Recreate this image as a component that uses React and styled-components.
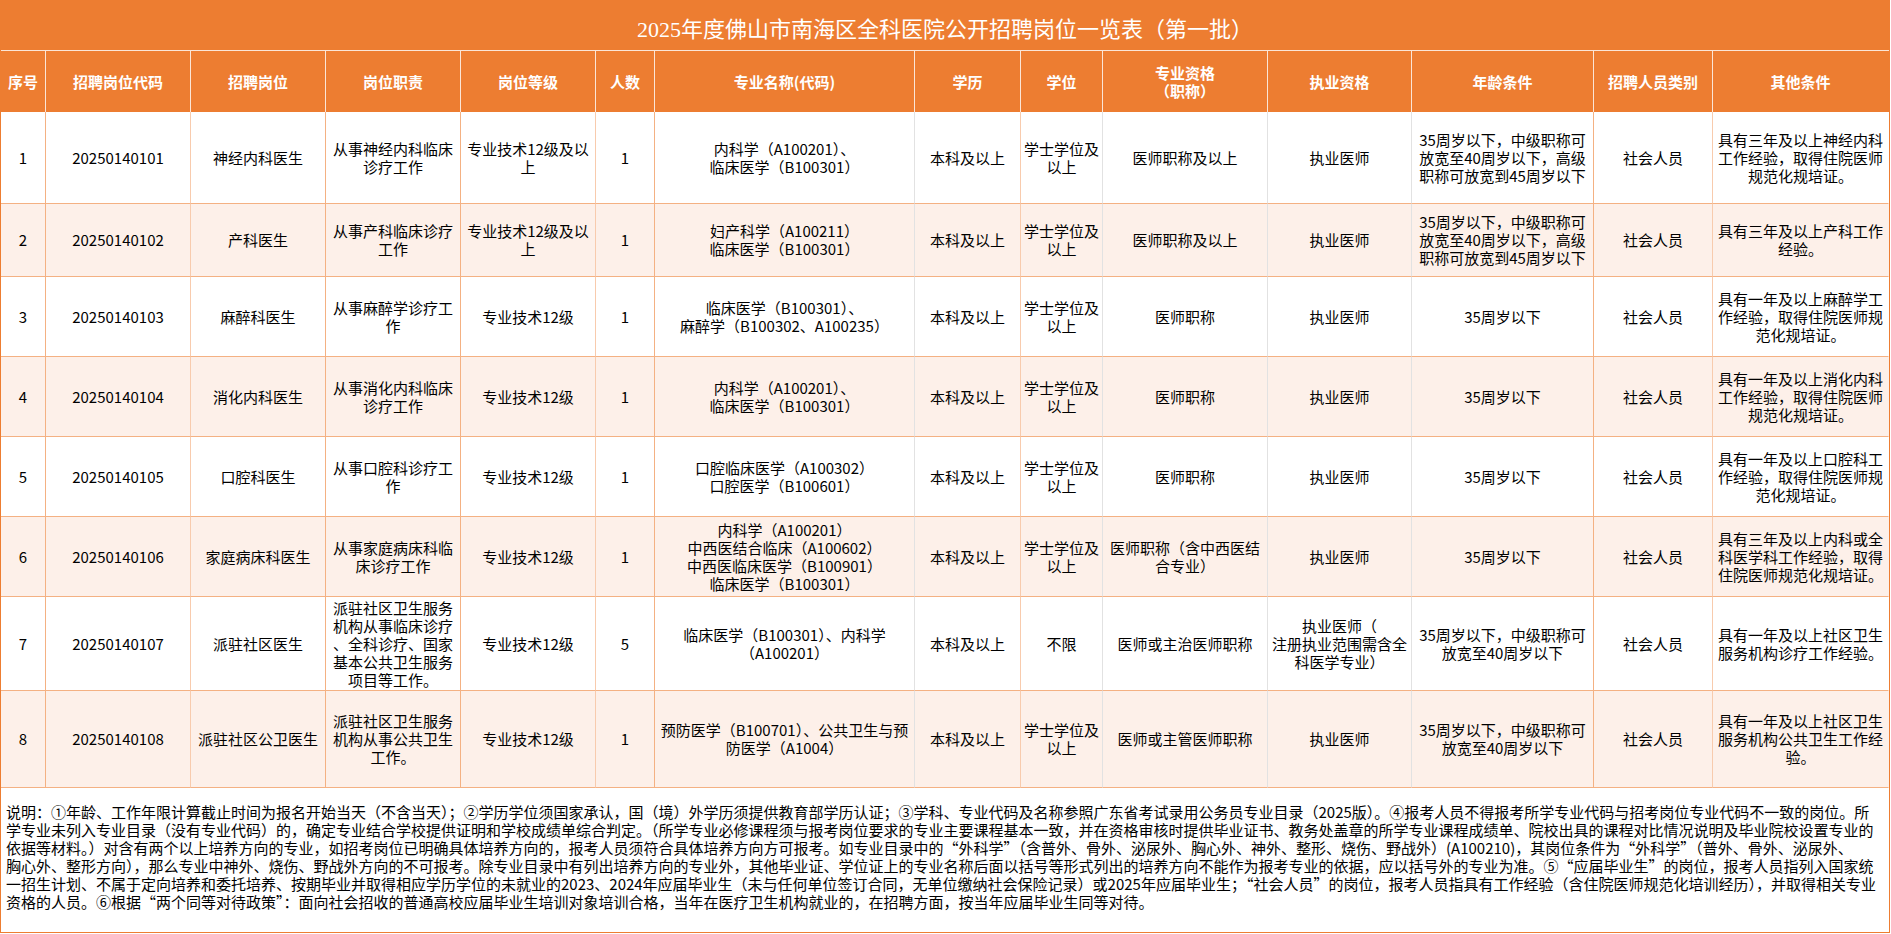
import React from 'react';
import styled, { createGlobalStyle } from 'styled-components';

const GlobalStyle = createGlobalStyle`
  html, body { margin: 0; padding: 0; background: #ffffff; }
  body {
    font-family: "Noto Sans CJK SC", "Noto Sans", sans-serif;
    color: #000000;
  }
  *, *::before, *::after { box-sizing: border-box; }
`;

const ORANGE = '#ED7D31';
const STRONG = '#F4B183';
const LIGHT = '#F8CBAD';
const GREY = '#E2E2E2';

const COLUMNS = [
  { w: 45, line: STRONG },
  { w: 145, line: LIGHT },
  { w: 135, line: STRONG },
  { w: 135, line: STRONG },
  { w: 135, line: LIGHT },
  { w: 59, line: STRONG },
  { w: 260, line: GREY },
  { w: 106, line: LIGHT },
  { w: 82, line: GREY },
  { w: 165, line: GREY },
  { w: 144, line: GREY },
  { w: 182, line: STRONG },
  { w: 119, line: LIGHT },
  { w: 176, line: 'transparent' },
];

const GRID = COLUMNS.map((c) => `${c.w}px`).join(' ');

const HEADERS = [
  '序号',
  '招聘岗位代码',
  '招聘岗位',
  '岗位职责',
  '岗位等级',
  '人数',
  '专业名称(代码)',
  '学历',
  '学位',
  '专业资格\n（职称）',
  '执业资格',
  '年龄条件',
  '招聘人员类别',
  '其他条件',
];

const AGE_LONG = '35周岁以下，中级职称可\n放宽至40周岁以下，高级\n职称可放宽到45周岁以下';
const AGE_MID = '35周岁以下，中级职称可\n放宽至40周岁以下';
const DEGREE = '学士学位及\n以上';

const ROWS = [
  {
    h: 92,
    cells: ['1', '20250140101', '神经内科医生', '从事神经内科临床\n诊疗工作', '专业技术12级及以\n上', '1',
      '内科学（A100201）、\n临床医学（B100301）', '本科及以上', DEGREE, '医师职称及以上', '执业医师', AGE_LONG, '社会人员',
      '具有三年及以上神经内科\n工作经验，取得住院医师\n规范化规培证。'],
  },
  {
    h: 73,
    cells: ['2', '20250140102', '产科医生', '从事产科临床诊疗\n工作', '专业技术12级及以\n上', '1',
      '妇产科学（A100211）\n临床医学（B100301）', '本科及以上', DEGREE, '医师职称及以上', '执业医师', AGE_LONG, '社会人员',
      '具有三年及以上产科工作\n经验。'],
  },
  {
    h: 80,
    cells: ['3', '20250140103', '麻醉科医生', '从事麻醉学诊疗工\n作', '专业技术12级', '1',
      '临床医学（B100301）、\n麻醉学（B100302、A100235）', '本科及以上', DEGREE, '医师职称', '执业医师', '35周岁以下', '社会人员',
      '具有一年及以上麻醉学工\n作经验，取得住院医师规\n范化规培证。'],
  },
  {
    h: 80,
    cells: ['4', '20250140104', '消化内科医生', '从事消化内科临床\n诊疗工作', '专业技术12级', '1',
      '内科学（A100201）、\n临床医学（B100301）', '本科及以上', DEGREE, '医师职称', '执业医师', '35周岁以下', '社会人员',
      '具有一年及以上消化内科\n工作经验，取得住院医师\n规范化规培证。'],
  },
  {
    h: 80,
    cells: ['5', '20250140105', '口腔科医生', '从事口腔科诊疗工\n作', '专业技术12级', '1',
      '口腔临床医学（A100302）\n口腔医学（B100601）', '本科及以上', DEGREE, '医师职称', '执业医师', '35周岁以下', '社会人员',
      '具有一年及以上口腔科工\n作经验，取得住院医师规\n范化规培证。'],
  },
  {
    h: 80,
    cells: ['6', '20250140106', '家庭病床科医生', '从事家庭病床科临\n床诊疗工作', '专业技术12级', '1',
      '内科学（A100201）\n中西医结合临床（A100602）\n中西医临床医学（B100901）\n临床医学（B100301）', '本科及以上', DEGREE,
      '医师职称（含中西医结\n合专业）', '执业医师', '35周岁以下', '社会人员',
      '具有三年及以上内科或全\n科医学科工作经验，取得\n住院医师规范化规培证。'],
  },
  {
    h: 94,
    cells: ['7', '20250140107', '派驻社区医生', '派驻社区卫生服务\n机构从事临床诊疗\n、全科诊疗、国家\n基本公共卫生服务\n项目等工作。', '专业技术12级', '5',
      '临床医学（B100301）、内科学\n（A100201）', '本科及以上', '不限', '医师或主治医师职称',
      '执业医师（\n注册执业范围需含全\n科医学专业）', AGE_MID, '社会人员',
      '具有一年及以上社区卫生\n服务机构诊疗工作经验。'],
  },
  {
    h: 97,
    cells: ['8', '20250140108', '派驻社区公卫医生', '派驻社区卫生服务\n机构从事公共卫生\n工作。', '专业技术12级', '1',
      '预防医学（B100701）、公共卫生与预\n防医学（A1004）', '本科及以上', DEGREE, '医师或主管医师职称', '执业医师', AGE_MID, '社会人员',
      '具有一年及以上社区卫生\n服务机构公共卫生工作经\n验。'],
  },
];

const NOTES = [
  '说明：①年龄、工作年限计算截止时间为报名开始当天（不含当天）；②学历学位须国家承认，国（境）外学历须提供教育部学历认证；③学科、专业代码及名称参照广东省考试录用公务员专业目录（2025版）。④报考人员不得报考所学专业代码与招考岗位专业代码不一致的岗位。所',
  '学专业未列入专业目录（没有专业代码）的，确定专业结合学校提供证明和学校成绩单综合判定。（所学专业必修课程须与报考岗位要求的专业主要课程基本一致，并在资格审核时提供毕业证书、教务处盖章的所学专业课程成绩单、院校出具的课程对比情况说明及毕业院校设置专业的',
  '依据等材料。）对含有两个以上培养方向的专业，如招考岗位已明确具体培养方向的，报考人员须符合具体培养方向方可报考。如专业目录中的“外科学”（含普外、骨外、泌尿外、胸心外、神外、整形、烧伤、野战外）(A100210)，其岗位条件为“外科学”（普外、骨外、泌尿外、',
  '胸心外、整形方向），那么专业中神外、烧伤、野战外方向的不可报考。除专业目录中有列出培养方向的专业外，其他毕业证、学位证上的专业名称后面以括号等形式列出的培养方向不能作为报考专业的依据，应以括号外的专业为准。⑤“应届毕业生”的岗位，报考人员指列入国家统',
  '一招生计划、不属于定向培养和委托培养、按期毕业并取得相应学历学位的未就业的2023、2024年应届毕业生（未与任何单位签订合同，无单位缴纳社会保险记录）或2025年应届毕业生；“社会人员”的岗位，报考人员指具有工作经验（含住院医师规范化培训经历），并取得相关专业',
  '资格的人员。⑥根据“两个同等对待政策”：面向社会招收的普通高校应届毕业生培训对象培训合格，当年在医疗卫生机构就业的，在招聘方面，按当年应届毕业生同等对待。',
];

const Sheet = styled.div`
  width: 1890px;
  border-left: 1px solid ${ORANGE};
  border-right: 1px solid ${ORANGE};
  border-bottom: 1px solid ${ORANGE};
  background: #ffffff;
`;

const TitleBar = styled.div`
  height: 51px;
  background: ${ORANGE};
  border-bottom: 1px solid #FBE5D6;
  display: flex;
  align-items: center;
  justify-content: center;
  padding-top: 3px;
  color: #ffffff;
  font-family: "Liberation Serif", "Noto Sans CJK SC", serif;
  font-size: 22px;
  font-weight: 400;
  letter-spacing: 0;
`;

const HeaderRow = styled.div`
  display: grid;
  grid-template-columns: ${GRID};
  height: 61px;
  background: ${ORANGE};
`;

const HeaderCell = styled.div`
  display: flex;
  align-items: center;
  justify-content: center;
  text-align: center;
  white-space: pre;
  color: #ffffff;
  font-size: 15px;
  font-weight: 700;
  line-height: 18px;
  border-right: 1px solid ${(p) => (p.$last ? 'transparent' : '#FBE5D6')};
`;

const Row = styled.div`
  display: grid;
  grid-template-columns: ${GRID};
  height: ${(p) => p.$height}px;
  background: ${(p) => (p.$alt ? '#FDF0E9' : '#ffffff')};
`;

const Cell = styled.div`
  display: flex;
  align-items: center;
  justify-content: center;
  text-align: center;
  white-space: pre;
  padding: 0 2px;
  font-size: 15px;
  line-height: 18px;
  color: #000000;
  border-right: 1px solid ${(p) => p.$line};
  border-bottom: 1px solid ${STRONG};
  overflow: visible;
`;

const Notes = styled.div`
  height: 144px;
  display: flex;
  flex-direction: column;
  justify-content: center;
  padding: 0 0 6px 5px;
  font-size: 15px;
  line-height: 18px;
  color: #000000;
`;

const NoteLine = styled.div`
  white-space: nowrap;
`;

export default function App() {
  return (
    <>
      <GlobalStyle />
      <Sheet>
        <TitleBar>2025年度佛山市南海区全科医院公开招聘岗位一览表（第一批）</TitleBar>
        <HeaderRow>
          {HEADERS.map((h, i) => (
            <HeaderCell key={i} $last={i === HEADERS.length - 1}>{h}</HeaderCell>
          ))}
        </HeaderRow>
        {ROWS.map((r, ri) => (
          <Row key={ri} $height={r.h} $alt={ri % 2 === 1}>
            {r.cells.map((c, ci) => (
              <Cell key={ci} $line={COLUMNS[ci].line}>{c}</Cell>
            ))}
          </Row>
        ))}
        <Notes>
          {NOTES.map((n, i) => (
            <NoteLine key={i}>{n}</NoteLine>
          ))}
        </Notes>
      </Sheet>
    </>
  );
}
